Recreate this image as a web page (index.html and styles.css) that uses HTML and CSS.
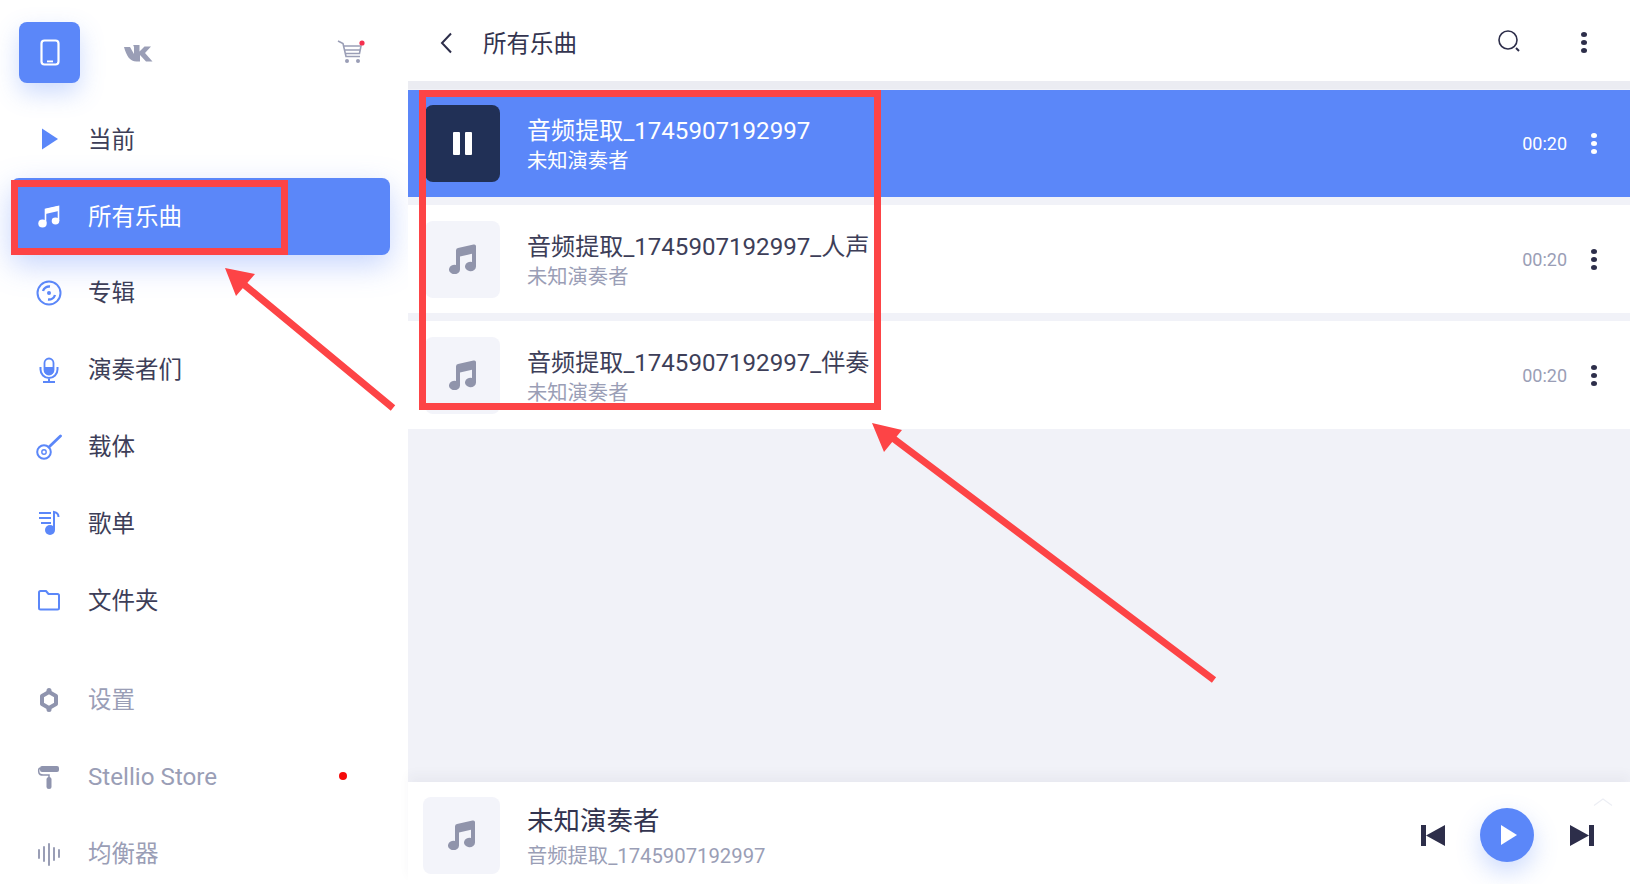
FILE: index.html
```html
<!DOCTYPE html>
<html lang="zh-CN">
<head>
  <meta charset="UTF-8" />
  <meta name="viewport" content="width=device-width, initial-scale=1" />
  <title>所有乐曲</title>
  <link rel="stylesheet" href="styles.css">
</head>
<body>
  <svg width="0" height="0" class="defs">
    <symbol id="note" viewBox="0 0 27 30">
      <path d="M7 6.500Q7 4.600 9 4.100L24.500.5Q27 0 27 2.200V22.500a5.500 4.700 0 1 1-4-4.500V9.800L11 12.600V25.500a5.500 4.700 0 1 1-4-4.500Z"/>
    </symbol>
  </svg>

  <div class="app">
    <aside class="sidebar">
      <div class="side-top">
        <div class="source-btn">
          <svg width="20" height="27" viewBox="0 0 20 27"><rect x="1.500" y="1.500" width="17" height="24" rx="3" fill="none" stroke="#fff" stroke-width="2.200"/><rect x="7" y="21.500" width="6" height="1.800" fill="#fff"/></svg>
        </div>
        <svg class="vk" width="30" height="17" viewBox="0 0 30 17"><path fill="#9a9eb6" d="M0 2h6l4 7V2l-.8-2h6.300v6.500L20.500 1.500H27l-6 6.500 7.500 8.500H22l-6-6.500v6.500h-3.500C6 16.500 2.500 11 0 2Z"/></svg>
        <svg class="cart" width="28" height="24" viewBox="0 0 28 24">
          <path fill="none" stroke="#9a9eb6" stroke-width="1.600" d="M1 1l5 2.500 3 13h14M6.500 6H24l-1.500 7.500H8.500M8 10h15"/>
          <circle cx="10" cy="21" r="2" fill="#9a9eb6"/><circle cx="21" cy="21" r="2" fill="#9a9eb6"/>
          <circle cx="25" cy="3" r="2.600" fill="#f5304f"/>
        </svg>
      </div>

      <nav class="nav">
        <div class="nav-item">
          <svg class="nav-icon" width="26" height="26" viewBox="0 0 26 26"><path fill="#5b87f9" d="M6 2.500L22 13 6 23.500Z"/></svg>
          <span>当前</span>
        </div>
        <div class="nav-item active">
          <svg class="nav-icon" width="26" height="26" viewBox="0 0 26 26"><path fill="none" stroke="#fff" stroke-width="1.600" d="M9.500 20V6.500L22.500 3.500V18"/><path fill="#fff" d="M9.500 6L22.500 3V8L9.500 11Z"/><ellipse cx="6.500" cy="20.500" rx="4.200" ry="3.900" fill="#fff"/><ellipse cx="19.500" cy="18" rx="3.800" ry="3.400" fill="#fff"/></svg>
          <span>所有乐曲</span>
        </div>
        <div class="nav-item">
          <svg class="nav-icon" width="26" height="26" viewBox="0 0 26 26" fill="none" stroke="#5b87f9" stroke-width="2"><circle cx="13" cy="13" r="11.500"/><circle cx="13" cy="13" r="2" fill="#5b87f9" stroke="none"/><path stroke-width="2.400" d="M7 11a6.500 6.500 0 0 1 7-4.500M19 15a6.500 6.500 0 0 1-7 4.500"/></svg>
          <span>专辑</span>
        </div>
        <div class="nav-item">
          <svg class="nav-icon" width="26" height="26" viewBox="0 0 26 26"><path fill="#5b87f9" d="M8 10h10v3a5 5 0 0 1-10 0Z"/><rect x="8.500" y="1.500" width="9" height="16" rx="4.500" fill="none" stroke="#5b87f9" stroke-width="1.800"/><path fill="none" stroke="#5b87f9" stroke-width="2" d="M4.500 10v2.500a8.500 8.500 0 0 0 17 0V10M13 21v3.500M7 25h12"/></svg>
          <span>演奏者们</span>
        </div>
        <div class="nav-item">
          <svg class="nav-icon" width="26" height="26" viewBox="0 0 26 26" fill="none" stroke="#5b87f9"><circle cx="8" cy="18" r="6.800" stroke-width="2"/><circle cx="8" cy="18" r="2.200" stroke-width="1.400"/><path stroke-width="2.800" stroke-linecap="round" d="M13 13L24.500 2"/></svg>
          <span>载体</span>
        </div>
        <div class="nav-item">
          <svg class="nav-icon" width="26" height="26" viewBox="0 0 26 26"><path fill="none" stroke="#5b87f9" stroke-width="2" d="M3 3h12M3 8h12M5 13h10M18 16V2c3 .5 4.500 2 4.500 5"/><circle cx="14" cy="20" r="5" fill="#5b87f9"/><rect x="17" y="3" width="2" height="17" fill="#5b87f9"/></svg>
          <span>歌单</span>
        </div>
        <div class="nav-item">
          <svg class="nav-icon" width="26" height="26" viewBox="0 0 26 26"><path fill="none" stroke="#5b87f9" stroke-width="2" stroke-linejoin="round" d="M3 5.500q0-1.500 1.500-1.500H10l2.500 3h9q1.500 0 1.500 1.500V21q0 1.500-1.500 1.500h-17Q3 22.500 3 21Z"/></svg>
          <span>文件夹</span>
        </div>
      </nav>

      <nav class="nav nav-second">
        <div class="nav-item muted">
          <svg class="nav-icon" width="26" height="26" viewBox="0 0 26 26"><path fill="none" stroke="#8f94ae" stroke-width="4" stroke-linejoin="round" d="M13 5l7 4v8l-7 4-7-4V9Z"/><circle cx="13" cy="3.500" r="2.500" fill="#8f94ae"/><circle cx="13" cy="22.500" r="2.500" fill="#8f94ae"/></svg>
          <span>设置</span>
        </div>
        <div class="nav-item muted">
          <svg class="nav-icon" width="26" height="26" viewBox="0 0 26 26"><rect x="4" y="2" width="19" height="6" rx="2" fill="#8f94ae"/><path fill="none" stroke="#8f94ae" stroke-width="1.500" d="M4 4Q2 5 3 9q.5 2 4 2h6v3"/><rect x="10.500" y="13" width="5" height="12" rx="2.500" fill="#8f94ae"/></svg>
          <span class="store">Stellio Store</span>
          <i class="red-dot"></i>
        </div>
        <div class="nav-item muted">
          <svg class="nav-icon" width="26" height="26" viewBox="0 0 26 26"><path fill="none" stroke="#8f94ae" stroke-width="1.800" stroke-linecap="round" d="M3 9v8M8 6v14M13 3v21M18 7v12M23 9v7"/></svg>
          <span>均衡器</span>
        </div>
      </nav>
    </aside>

    <main class="main">
      <header class="topbar">
        <svg class="back" width="13" height="22" viewBox="0 0 13 22"><path fill="none" stroke="#2d2e4a" stroke-width="2" d="M11 1.500L2 11l9 9.500"/></svg>
        <h1 class="page-title">所有乐曲</h1>
        <svg class="search" width="24" height="24" viewBox="0 0 24 24" fill="none" stroke="#2d2e4a"><circle cx="11" cy="11" r="9" stroke-width="1.600"/><path stroke-width="2" d="M19 19l3 3"/></svg>
        <div class="dots dark"><i></i><i></i><i></i></div>
      </header>

      <section class="list">
        <div class="row playing">
          <div class="tile dark-tile">
            <svg width="19" height="23" viewBox="0 0 19 23"><rect width="7" height="23" rx="1" fill="#fff"/><rect x="12" width="7" height="23" rx="1" fill="#fff"/></svg>
          </div>
          <div class="row-text">
            <div class="row-title">音频提取_1745907192997</div>
            <div class="row-sub">未知演奏者</div>
          </div>
          <span class="time">00:20</span>
          <div class="dots"><i></i><i></i><i></i></div>
        </div>
        <div class="row">
          <div class="tile"><svg width="27" height="30" fill="#9094ab"><use href="#note"/></svg></div>
          <div class="row-text">
            <div class="row-title">音频提取_1745907192997_人声</div>
            <div class="row-sub">未知演奏者</div>
          </div>
          <span class="time">00:20</span>
          <div class="dots dark"><i></i><i></i><i></i></div>
        </div>
        <div class="row">
          <div class="tile"><svg width="27" height="30" fill="#9094ab"><use href="#note"/></svg></div>
          <div class="row-text">
            <div class="row-title">音频提取_1745907192997_伴奏</div>
            <div class="row-sub">未知演奏者</div>
          </div>
          <span class="time">00:20</span>
          <div class="dots dark"><i></i><i></i><i></i></div>
        </div>
      </section>

      <footer class="player">
        <div class="tile"><svg width="27" height="30" fill="#9094ab"><use href="#note"/></svg></div>
        <div class="player-text">
          <div class="player-title">未知演奏者</div>
          <div class="row-sub">音频提取_1745907192997</div>
        </div>
        <div class="controls">
          <svg width="24" height="21" viewBox="0 0 24 21"><path fill="#2d2e4a" d="M0 0h5v21H0ZM24 0v21L5 10.500Z"/></svg>
          <div class="play-btn"><svg width="16" height="20" viewBox="0 0 16 20"><path fill="#fff" d="M0 0l16 10L0 20Z"/></svg></div>
          <svg class="next" width="24" height="21" viewBox="0 0 24 21"><path fill="#2d2e4a" d="M24 0h-5v21h5ZM0 0v21l19-10.500Z"/></svg>
        </div>
        <svg class="collapse" width="20" height="8" viewBox="0 0 20 8"><path fill="none" stroke="#eceef4" stroke-width="1.200" d="M1 7.500L10 1l9 6.500"/></svg>
      </footer>
    </main>
  </div>

  <!-- red marks drawn over the screenshot -->
  <div class="mark mark-nav"></div>
  <div class="mark mark-list"></div>
  <svg class="arrows" width="1630" height="884" viewBox="0 0 1630 884">
    <path stroke="#fd4446" stroke-width="7" d="M393 408L236 278M1214 680L886 433"/>
    <path fill="#fd4446" d="M225 268L255 274 236 296ZM872 423L902 430 884 452Z"/>
  </svg>
</body>
</html>
```

FILE: styles.css
```css
* {
  box-sizing: border-box;
}
html, body {
  margin: 0;
  height: 100%;
  overflow: hidden;
}
body {
  position: relative;
  width: 1630px;
  height: 884px;
  background: #fff;
  color: #33344f;
  font-family: Roboto, 'Noto Sans CJK SC', sans-serif;
}
.defs {
  position: absolute;
}
.app {
  display: flex;
  height: 884px;
}

/* sidebar */
.sidebar {
  width: 408px;
  flex: none;
  background: #fff;
  overflow: hidden;
}
.side-top {
  display: flex;
  align-items: center;
  height: 61px;
  margin: 22px 0 18px 19px;
}
.source-btn {
  width: 61px;
  height: 61px;
  border-radius: 8px;
  background: #5b87f9;
  box-shadow: 0 10px 24px rgba(91, 135, 249, 0.3);
  display: flex;
  align-items: center;
  justify-content: center;
}
.vk {
  margin-left: 44px;
  margin-top: 2px;
}
.cart {
  margin-left: 183px;
  margin-top: -2px;
}
.nav {
  display: flex;
  flex-direction: column;
}
.nav-second {
  margin-top: 23px;
}
.nav-item {
  display: flex;
  align-items: center;
  height: 76.8px;
  margin: 0 18px 0 11px;
  padding-left: 25px;
  border-radius: 8px;
  font-size: 23.5px;
  color: #3d3e58;
}
.nav-item span {
  padding-bottom: 3px;
}
.nav-item .store {
  font-size: 24.2px;
  padding-bottom: 0;
}
.nav-icon {
  width: 26px;
  flex: none;
  margin-right: 26px;
}
.nav-item.active {
  background: #5b87f9;
  color: #fff;
  box-shadow: 0 10px 30px rgba(91, 135, 249, 0.35);
}
.nav-item.muted {
  color: #9a9eb6;
}
.red-dot {
  width: 8px;
  height: 8px;
  border-radius: 50%;
  background: #f50a0a;
  margin: 0 0 2px 122px;
}

/* main column */
.main {
  flex: 1;
  display: flex;
  flex-direction: column;
  background: #f1f2f8;
}
.topbar {
  height: 81px;
  flex: none;
  background: #fff;
  display: flex;
  align-items: center;
  padding: 4px 0 0 32px;
}
.page-title {
  margin: 0 0 0 30px;
  padding-bottom: 2px;
  font-size: 23.5px;
  font-weight: 400;
  color: #33344f;
}
.search {
  margin-left: auto;
  margin-bottom: 3px;
}
.dots {
  display: flex;
  flex-direction: column;
  gap: 3px;
  margin-left: 60px;
  margin-right: 43px;
}
.dots i {
  width: 6px;
  height: 5px;
  border-radius: 50%;
  background: #fff;
}
.dots.dark i {
  background: #2d2e4a;
}
.list {
  flex: 1;
  display: flex;
  flex-direction: column;
  gap: 8px;
  padding-top: 9px;
  box-shadow: inset 0 8px 0 #ebecf2;
}
.row {
  display: flex;
  align-items: center;
  height: 108px;
  padding-left: 17px;
  background: #fff;
}
.row.playing {
  height: 107px;
  background: #5b87f9;
  color: #fff;
}
.tile {
  width: 75px;
  height: 77px;
  flex: none;
  border-radius: 8px;
  background: #f3f4fa;
  display: flex;
  align-items: center;
  justify-content: center;
}
.dark-tile {
  background: #213056;
}
.row-text {
  margin-left: 27px;
  padding-top: 4px;
  flex: 1;
}
.row-title {
  font-size: 24.1px;
  line-height: 31px;
  color: #3d3e58;
}
.row-sub {
  font-size: 20.3px;
  line-height: 28px;
  color: #9a9eb6;
}
.playing .row-title,
.playing .row-sub,
.playing .time {
  color: #fff;
}
.time {
  font-size: 18px;
  color: #9a9eb6;
}
.row .dots {
  margin-left: 24px;
  margin-right: 33px;
}

/* player */
.player {
  height: 102px;
  flex: none;
  position: relative;
  background: #fff;
  display: flex;
  align-items: center;
  padding: 4px 0 0 15px;
  box-shadow: 0 -8px 10px rgba(40, 45, 80, 0.04);
}
.player .tile {
  width: 77px;
}
.player-text {
  margin-left: 27px;
  padding-top: 4px;
  flex: 1;
}
.player-title {
  font-size: 26.5px;
  line-height: 36px;
  color: #33344f;
}
.player-text .row-sub {
  line-height: 30px;
  margin-top: 2px;
}
.controls {
  display: flex;
  align-items: center;
  gap: 35px;
  margin-right: 36px;
}
.next {
  margin-left: 1px;
}
.play-btn {
  width: 54px;
  height: 54px;
  border-radius: 50%;
  background: #5b87f9;
  box-shadow: 0 10px 24px rgba(91, 135, 249, 0.3);
  display: flex;
  align-items: center;
  justify-content: center;
  padding-left: 3px;
}
.collapse {
  position: absolute;
  top: 16px;
  right: 17px;
}

/* annotations */
.mark {
  position: absolute;
  border: 7px solid #fd4446;
}
.mark-nav {
  left: 11px;
  top: 180px;
  width: 277px;
  height: 75px;
}
.mark-list {
  left: 419px;
  top: 90px;
  width: 462px;
  height: 320px;
}
.arrows {
  position: absolute;
  left: 0;
  top: 0;
}
```
